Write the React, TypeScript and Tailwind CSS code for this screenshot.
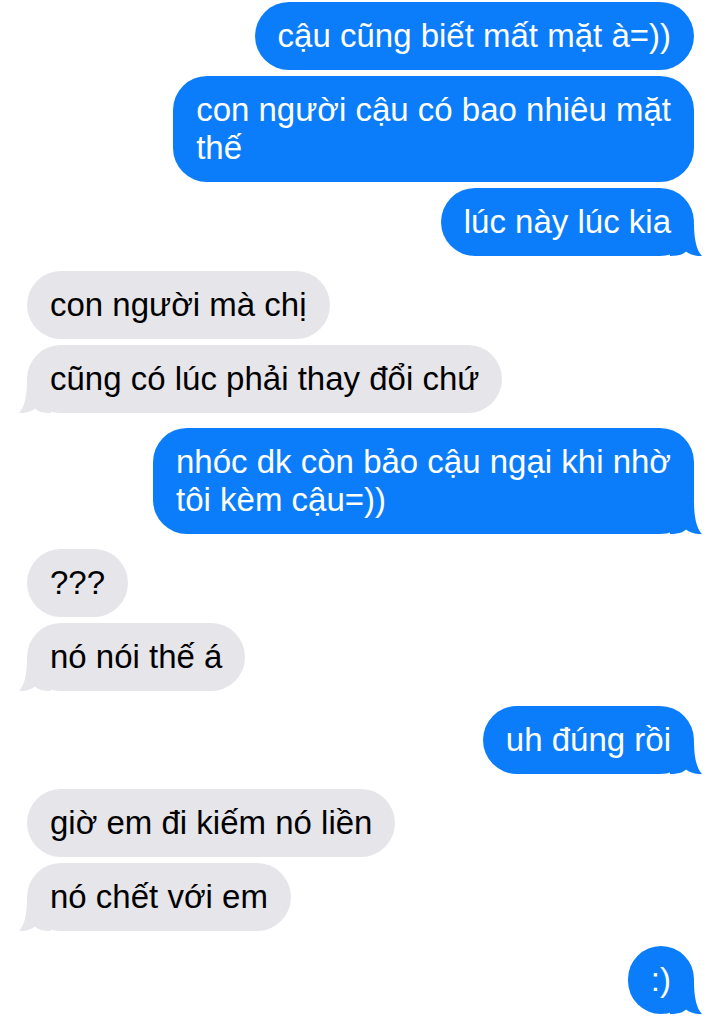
import React from "react";

type Msg = { text: string; me: boolean; tail?: boolean; gap?: "sm" | "lg" };

const messages: Msg[] = [
  { text: "cậu cũng biết mất mặt à=))", me: true },
  { text: "con người cậu có bao nhiêu mặt\nthế", me: true, gap: "sm" },
  { text: "lúc này lúc kia", me: true, tail: true, gap: "sm" },
  { text: "con người mà chị", me: false, gap: "lg" },
  { text: "cũng có lúc phải thay đổi chứ", me: false, tail: true, gap: "sm" },
  { text: "nhóc dk còn bảo cậu ngại khi nhờ\ntôi kèm cậu=))", me: true, tail: true, gap: "lg" },
  { text: "???", me: false, gap: "lg" },
  { text: "nó nói thế á", me: false, tail: true, gap: "sm" },
  { text: "uh đúng rồi", me: true, tail: true, gap: "lg" },
  { text: "giờ em đi kiếm nó liền", me: false, gap: "lg" },
  { text: "nó chết với em", me: false, tail: true, gap: "sm" },
  { text: ":)", me: true, tail: true, gap: "lg" },
];

const Tail = ({ me }: { me: boolean }) => (
  <svg
    width="32"
    height="32"
    viewBox="0 0 32 32"
    className={
      me
        ? "absolute bottom-0 right-[-8px] fill-[#0b7dfb]"
        : "absolute bottom-0 left-[-8px] fill-[#e5e5ea] -scale-x-100"
    }
  >
    <path d="M0 0 H24 C24 16 27 27 32 32 C26 32.5 20 30.5 16 27.5 C13 30.5 8 32 0 32 Z" />
  </svg>
);

const Bubble = ({ msg }: { msg: Msg }) => (
  <div
    className={`flex ${msg.me ? "justify-end" : "justify-start"} ${
      msg.gap === "lg" ? "mt-[15px]" : msg.gap === "sm" ? "mt-[6px]" : ""
    }`}
  >
    <div
      className={`relative whitespace-pre-line rounded-[34px] px-[23px] py-[15px] text-[33px] leading-[38px] ${
        msg.me ? "bg-[#0b7dfb] text-white" : "bg-[#e5e5ea] text-black"
      }`}
    >
      {msg.tail && <Tail me={msg.me} />}
      <span className="relative">{msg.text}</span>
    </div>
  </div>
);

export default function App() {
  return (
    <div
      className="h-[1024px] w-[720px] overflow-hidden bg-white pl-[27px] pr-[26px] pt-[2px]"
      style={{ fontFamily: '"Liberation Sans", Arial, sans-serif' }}
    >
      {messages.map((m, i) => (
        <Bubble key={i} msg={m} />
      ))}
    </div>
  );
}
